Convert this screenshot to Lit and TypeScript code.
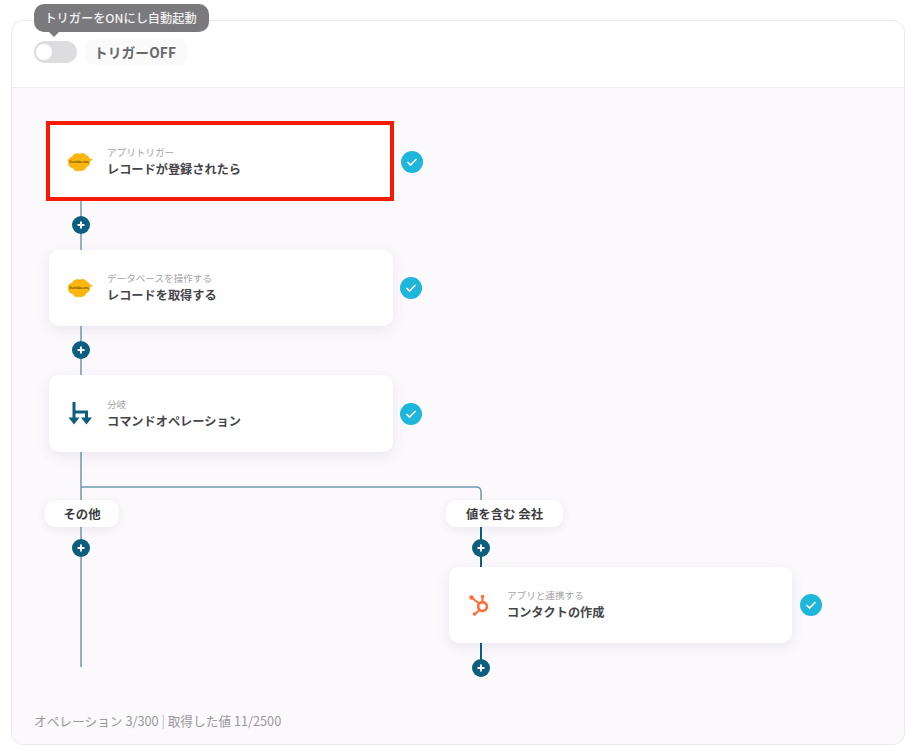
import { LitElement, html, css, svg } from "lit";
import { customElement } from "lit/decorators.js";

const CANVAS_TOP = 88;
const CANVAS_LEFT = 12;

const blob = html`<svg class="icon" viewBox="0 0 26 20" width="26" height="20">
  <path fill="#fdb60d" d="M1 10.500C0.500 7.500 2.500 5 5 5C6 2.200 9.500 0.500 12.500 1.800C15 0.300 18.500 1 19.500 3.500C21 3.500 22 4.500 22.500 6.500L25.800 7.500L23 9.500C23.500 12 22 14.500 19.500 15C18.500 18 15 19.800 12 18.800C9.500 19.800 6.500 18.500 6 16C3 16 1.200 13.500 1 10.500Z"/>
  <text x="12" y="11.300" text-anchor="middle" class="blobtext">Sunlaba.ana</text>
</svg>`;

const branch = html`<svg class="icon" viewBox="0 0 24 24" width="24" height="24">
  <path fill="none" stroke="#0b5e80" stroke-width="3" d="M6 0V17M6 10H18.500V17"/>
  <path fill="#0b5e80" d="M0.500 15.500H11.500L6 22.500ZM13 15.500H24L18.500 22.500Z"/>
</svg>`;

const hubspot = html`<svg class="icon" viewBox="0 0 24 24" width="24" height="24">
  <g fill="none" stroke="#ff6c37" stroke-width="2">
    <circle cx="14.500" cy="13.500" r="4.400" stroke-width="2.600"/>
    <path d="M14.500 9V4.500M11.200 10.500L4 5M11.500 17L7 21"/>
  </g>
  <circle cx="14.500" cy="3.500" r="1.800" fill="#ff6c37"/>
  <circle cx="3.500" cy="4.500" r="2.200" fill="#ff6c37"/>
  <circle cx="6.500" cy="21" r="1.800" fill="#ff6c37"/>
</svg>`;

interface Step {
  x: number; y: number; w: number; h: number;
  sub: string; title: string; icon: unknown; selected?: boolean;
  cx: number; cy: number;
}

const steps: Step[] = [
  { x: 46, y: 121, w: 348, h: 80, sub: "アプリトリガー", title: "レコードが登録されたら", icon: blob, selected: true, cx: 412, cy: 162 },
  { x: 49, y: 250, w: 344, h: 76, sub: "データベースを操作する", title: "レコードを取得する", icon: blob, cx: 411, cy: 288 },
  { x: 49, y: 375, w: 344, h: 77, sub: "分岐", title: "コマンドオペレーション", icon: branch, cx: 411, cy: 414 },
  { x: 449, y: 567, w: 343, h: 76, sub: "アプリと連携する", title: "コンタクトの作成", icon: hubspot, cx: 811, cy: 605 },
];

const pluses: [number, number][] = [[81, 225], [81, 350], [81, 548], [481, 548], [481, 668]];
const labels: { x: number; y: number; w: number; text: string }[] = [
  { x: 45, y: 500, w: 74, text: "その他" },
  { x: 446, y: 500, w: 117, text: "値を含む 会社" },
];

const px = (x: number, y: number) => `left:${x - CANVAS_LEFT}px;top:${y - CANVAS_TOP}px;`;

@customElement("app-root")
export class AppRoot extends LitElement {
  static styles = css`
    :host {
      display: block;
      width: 913px;
      height: 751px;
      background: #fff;
      font-family: "Noto Sans CJK JP", "Noto Sans", sans-serif;
      overflow: hidden;
    }
    .page { padding: 20px 8px 6px 11px; height: 100%; box-sizing: border-box; }
    .panel {
      height: 100%;
      box-sizing: border-box;
      border: 1px solid #ebe9ee;
      border-radius: 12px;
      display: flex;
      flex-direction: column;
      background: #fff;
    }
    .head {
      position: relative;
      flex: none;
      height: 67px;
      box-sizing: border-box;
      border-bottom: 1px solid #eeecf1;
      display: flex;
      align-items: center;
      gap: 9px;
      padding: 0 0 4px 22px;
    }
    .toggle {
      width: 43px; height: 22px; border-radius: 11px; background: #dddcdf;
      position: relative; flex: none;
    }
    .toggle::after {
      content: ""; position: absolute; left: 2px; top: 3px; width: 16px; height: 16px;
      border-radius: 50%; background: #fff;
    }
    .state {
      font-size: 13.700px; font-weight: 700; color: #68686c; background: #fafafb;
      padding: 4px 11px 4px 8px; border-radius: 8px; line-height: 18px; letter-spacing: 0.1px;
    }
    .tip {
      position: absolute; left: 22px; top: -17px; height: 28px; width: 175px;
      background: #7a7a7c; color: #f1f1f1; border-radius: 10px; font-size: 12.200px; font-weight: 500;
      display: flex; align-items: center; justify-content: center; white-space: nowrap;
      box-sizing: border-box; padding-right: 2px;
    }
    .tip::after {
      content: ""; position: absolute; left: 14px; bottom: -5px; width: 0; height: 0;
      border-left: 6px solid transparent; border-right: 6px solid transparent;
      border-top: 6px solid #7a7a7c;
    }
    .canvas {
      position: relative; flex: 1; background: #fbf9fc;
      border-radius: 0 0 11px 11px; overflow: hidden;
    }
    .wires { position: absolute; left: 0; top: 0; }
    .card {
      position: absolute; box-sizing: border-box; background: #fff; border-radius: 10px;
      box-shadow: 0 4px 14px rgba(60, 50, 90, 0.09);
      display: flex; align-items: center; padding-left: 19px; gap: 15px;
    }
    .card.selected {
      border: 4px solid #f81a05; border-radius: 0; padding: 1px 0 0 18px; box-shadow: none;
    }
    .iconbox { width: 24px; display: flex; justify-content: center; flex: none; }
    .icon { display: block; flex: none; }
    .blobtext { font-size: 3.500px; font-family: "Liberation Sans", sans-serif; fill: #3a2a00; }
    .texts { display: flex; flex-direction: column; gap: 1px; }
    .sub { font-size: 9.600px; line-height: 13px; color: #a3a3a8; white-space: nowrap; }
    .title { font-size: 12.200px; line-height: 18px; font-weight: 700; color: #45454a; white-space: nowrap; }
    .check {
      position: absolute; width: 22px; height: 22px; margin: -11px 0 0 -11px; border-radius: 50%;
      background: #1fb6dc; display: flex; align-items: center; justify-content: center;
    }
    .plus {
      position: absolute; width: 18px; height: 18px; margin: -9px 0 0 -9px; border-radius: 50%;
      background: #0b5e80; display: flex; align-items: center; justify-content: center;
    }
    .label {
      position: absolute; height: 27px; box-sizing: border-box; background: #fff; border-radius: 10px;
      box-shadow: 0 3px 10px rgba(60, 50, 90, 0.08);
      display: flex; align-items: center; justify-content: center;
      font-size: 12.400px; font-weight: 700; color: #3c3c40; white-space: nowrap;
    }
    .stats {
      position: absolute; left: 22px; bottom: 15px; font-size: 12.700px; line-height: 16px; color: #98989d;
      white-space: nowrap;
    }
    .stats i { font-style: normal; color: #a9c4dc; }
  `;

  render() {
    return html`
      <div class="page">
        <div class="panel">
          <div class="head">
            <div class="toggle"></div>
            <div class="state">トリガーOFF</div>
            <div class="tip">トリガーをONにし自動起動</div>
          </div>
          <div class="canvas">
            <svg class="wires" width="893" height="657" viewBox="12 88 893 657" fill="none">
              ${svg`
                <path stroke="#6f9bb0" stroke-width="1.500" d="M81 200V667M81 487H476Q481 487 481 492V500"/>
                <path stroke="#0b5e80" stroke-width="2" d="M481 527V567M481 643V660"/>
              `}
            </svg>
            ${steps.map((s) => html`
              <div class="card ${s.selected ? "selected" : ""}"
                   style="${px(s.x, s.y)}width:${s.w}px;height:${s.h}px;">
                <div class="iconbox">${s.icon}</div>
                <div class="texts">
                  <div class="sub">${s.sub}</div>
                  <div class="title">${s.title}</div>
                </div>
              </div>
              <div class="check" style="${px(s.cx, s.cy)}">
                <svg width="12" height="10" viewBox="0 0 12 10" fill="none">
                  <path d="M1.500 5L4.500 8L10.500 2" stroke="#fff" stroke-width="1.600"/>
                </svg>
              </div>
            `)}
            ${labels.map((l) => html`
              <div class="label" style="${px(l.x, l.y)}width:${l.w}px;">${l.text}</div>
            `)}
            ${pluses.map(([x, y]) => html`
              <div class="plus" style="${px(x, y)}">
                <svg width="10" height="10" viewBox="0 0 10 10">
                  <path d="M5 1.500V8.500M1.500 5H8.500" stroke="#fff" stroke-width="2"/>
                </svg>
              </div>
            `)}
            <div class="stats">オペレーション 3/300 <i>|</i> 取得した値 11/2500</div>
          </div>
        </div>
      </div>
    `;
  }
}
